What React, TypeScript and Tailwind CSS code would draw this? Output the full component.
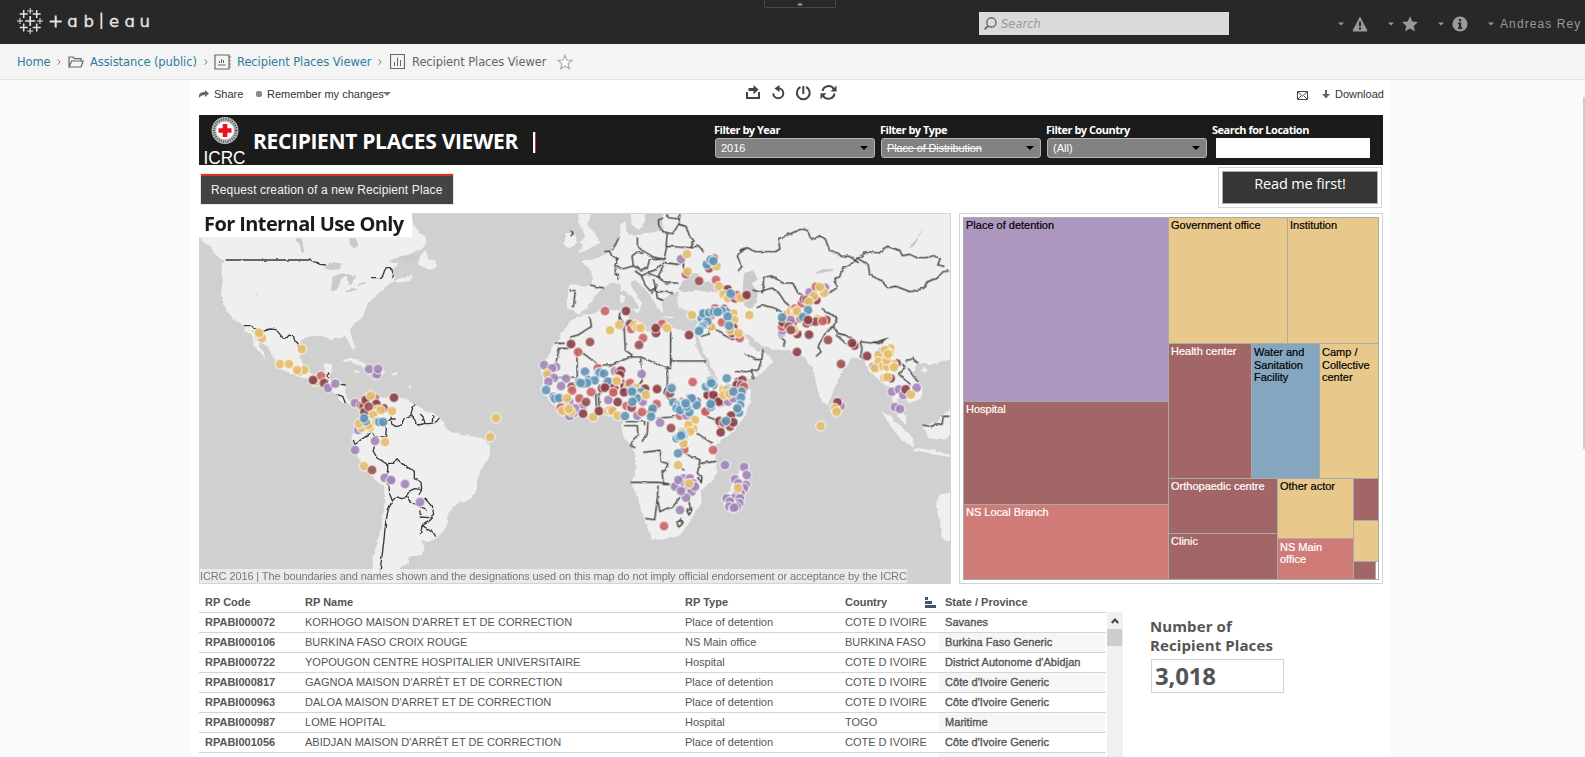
import React from "react";

const FILL: Record<string, string> = {
  y: "#e3bc6c",
  p: "#a184b6",
  b: "#98504f",
  d: "#883d42",
  r: "#c96462",
  u: "#6195b5",
};

/* Marker positions, drawn in order: colour key, x, y */
const AMERICAS =
  "y192,384 y201,399 y192,384 y320,432 y255,477 y282,477 y315,500 y327,495 y306,495 y362,530 r378,513 d354,525 d387,534 p399,549 p421,536 p540,508 p546,508 p522,492 p549,492 " +
  "p480,594 r498,602 r520,578 r540,580 b505,605 d512,585 y527,572 d597,578 d566,610 d544,597 d508,622 y546,615 y557,615 y591,618 b521,605 y535,630 p490,675 y512,665 y500,668 y525,668 y492,656 y520,660 y545,650 u553,651 u564,651 u512,648 u507,640 " +
  "p540,708 y570,711 p480,735 y507,783 b531,795 p569,819 p589,828 p588,825 p630,837 p675,891 y903,639 y885,696";
const OLD_WORLD =
  "p483,162 y501,147 b498,207 y503,199 b567,190 r582,160 y590,184 u560,178 u572,164 u580,168 b537,228 r588,225 y597,244 d623,253 y610,268 y624,280 b645,280 r650,270 d674,275 y662,279 u632,266 d680,270 y688,330 " +
  "r255,318 d318,318 y270,376 y297,360 d330,357 r334,372 y345,360 y352,368 y362,369 d408,384 r426,357 d407,369 y441,369 r369,399 b357,420 d507,390 r174,441 d153,417 b210,411 y516,330 " +
  "r585,310 d612,312 u553,327 p560,335 r574,330 u545,340 u550,325 u568,323 u582,320 y640,325 r606,352 y643,345 d640,368 y573,365 d636,384 y630,375 u618,320 u605,318 u593,321 u623,335 u627,362 r659,399 y656,384 u562,350 u550,361 u545,366 u540,373 u537,378 " +
  "p72,480 p108,486 p96,490 p84,513 y81,507 p102,519 p138,521 p123,543 p85,530 u78,555 b155,545 r156,557 p112,580 p100,575 y125,590 p148,590 p180,590 p190,600 p160,625 p148,633 p165,610 r122,608 r178,580 u105,581 u117,579 y141,579 y127,618 y153,620 y146,612 b198,591 d189,626 y219,636 d237,618 " +
  "u195,500 r233,490 u235,504 u240,503 u252,506 p285,498 d296,500 d303,497 d300,510 y292,525 d246,550 d258,540 d303,535 d309,547 b285,545 r276,530 u177,531 u190,537 u205,525 u224,526 u201,534 u182,534 u264,530 p365,507 " +
  "r213,561 d282,548 y325,545 r330,534 y347,548 d375,551 u336,555 u362,562 d411,552 b450,565 u455,549 r518,531 y291,525 d255,548 r279,563 d293,591 p265,585 r280,562 d312,562 y290,528 p368,590 r410,597 r320,603 b335,608 y350,575 y378,570 u350,580 u337,590 u336,560 y265,617 r275,615 y278,618 y293,632 u315,633 p352,632 r366,621 d395,620 u398,611 u393,635 p420,653 b453,669 " +
  "u468,598 r488,590 u460,592 u475,600 p520,605 d510,580 b530,590 u490,610 r480,632 p500,632 u470,610 u485,600 u495,593 u505,600 u518,588 u530,600 u508,622 u480,615 u500,605 u515,580 u497,595 " +
  "u566,548 u572,528 u580,540 y608,550 d565,567 r590,575 p600,595 d563,570 u558,545 u570,537 u574,534 u620,520 d655,530 d667,525 r660,545 y610,554 u623,550 u632,556 d575,590 b560,615 r556,620 d580,570 r605,590 d596,590 p625,590 p640,580 u573,605 u572,597 y620,555 y612,570 d650,540 d665,540 r672,545 u665,560 u663,578 u660,600 u652,615 u657,623 u652,610 y628,566 u640,560 " +
  "y525,645 y520,672 y505,660 p486,690 y492,710 r493,733 b605,660 b630,665 d633,632 d598,648 d612,652 d640,652 u618,648 d602,682 r579,735 y485,680 y510,680 y490,715 u470,700 u490,690 u478,695 u485,687 y474,780 u474,745 u483,692 " +
  "p470,838 p480,850 p490,820 p510,820 p520,835 p495,838 p465,845 p475,825 p505,850 p515,860 p525,845 p498,878 p483,858 y507,836 p480,915 r432,963 p615,780 p672,786 p680,810 p645,823 p660,840 p655,835 p678,840 p672,850 p662,865 p650,870 p640,880 p620,880 p630,890 p628,905 p660,880 p658,895 p640,910 p650,905 p642,908 y654,849 " +
  "p785,383 p787,376 r786,365 d788,352 r800,330 b818,355 y812,318 r826,310 y826,322 p812,345 r845,295 d852,283 p868,262 b860,285 r888,245 p915,248 d889,285 y882,273 y912,264 y900,246 y867,290 r842,340 y831,318 u786,337 b806,365 d832,387 y822,375 b813,375 d867,389 y870,345 b860,355 u864,315 d866,345 p900,350 r903,348 y892,342 b878,350 b887,350 d919,345 r908,348 u849,336 d864,345 b924,405 d831,441 b963,477 d1003,422 d996,414 d1041,453 " +
  "p1100,435 p1085,440 y1112,430 d1130,475 y1110,445 y1075,450 p1060,485 y1075,470 y1065,490 y1105,470 y1120,478 y1090,484 y1102,485 y1122,487 p1108,518 d1112,520 y1093,518 y1102,516 y1095,435 y1100,465 y1104,447 " +
  "p1116,560 p1137,553 p1150,570 p1190,548 d1157,553 y1173,569 p1125,606 p1140,612 p962,603 d952,592 y945,610 y950,620 y902,663 ";

const MAP_LINES_W =
  "M92,165H343 M343,160l8,10 12,2 12,6 18,2 M528,218h28q10,-6 12,-20l6,-10h12l4,14 6,14 M146,362l18,0 15,8 28,8 18,-6 18,2 12,14 10,12 10,-2 8,-8 12,6 6,14 8,10 4,10 M404,502l-8,10 2,14 M436,538l16,2 M425,568l18,6 8,20 " +
  "M475,705l5,14 14,-12 20,-14 14,-10 M530,683l10,12 32,0 2,-25 -6,-14 20,-14 14,0 M588,635l2,22 14,8 14,-4 10,-22 20,-8 4,-20 8,-12 M650,632l10,14 8,14 20,-4 14,0 20,-4 12,-14 M690,655l-6,-20 -8,-8 M712,650l2,-20 M540,723l-6,14 12,22 20,12 12,8 M578,775l18,0 10,-14 12,12 20,14 20,12 0,22 20,10 2,20 -8,18 M578,775l0,22 -6,20 10,26 2,24 8,20 M592,887l12,-12 16,6 14,-4 8,-18 16,-8 18,2 M634,877l14,14 28,14 20,8 M686,878l14,14 12,14 4,22 -12,10 -30,-2 M676,930l-2,-14 M716,935l-14,14 -20,12 -6,26 M682,961l20,14 16,12 4,8 M592,887l-12,26 -8,40 -6,60 -6,50 -8,60";

const MAP_LINES_E =
  "M440,24l6,14 30,4 M416,60l0,-16 14,-6 M416,60l12,20 30,6 18,-28 4,-34 M476,58l22,6 8,24 16,20 -10,20 -40,-2 -34,-2 4,-38 -18,-10 M512,128l24,-6 16,20 M352,95l0,30 20,14 30,18 30,6 8,-38 M252,140l16,-2 8,16 20,8 M296,100l-12,22 -8,14 M284,185l8,-28 M284,185l26,6 30,-8 -4,-30 14,-12 20,4 M340,183l22,12 20,-6 6,-24 50,-4 M286,190l0,18 8,-2 0,18 M345,198l20,14 20,-10 22,-8 24,-22 40,6 16,-4 8,30 M430,180l-16,36 -28,-10 M414,216l22,18 40,0 M365,214l10,26 16,18 20,-14 M400,222l8,30 -14,14 M410,260l22,0 28,4 M408,252l4,28 18,6 M210,240l42,10 M148,255l18,2 -6,50 M490,172l2,36 14,6 M152,75l8,10 -8,8 M654,198l12,-14 -14,-30 10,-20 14,-4 " +
  "M210,335l4,30 -14,8 -24,16 -26,8 M106,415h28 M106,480l12,-50h28 M170,430l2,86 -70,2 M170,430l66,50 40,0 56,-24 4,-6 -20,-14 -4,-80 -14,-20 M300,318l-4,34 M332,456l30,0 80,34 M362,460l4,30 0,40 -22,20 M442,490v48l-10,30 M452,370v120h-10 M452,468h106 M442,538l-10,24 14,20 20,30 M316,650h58v10 M312,662h40l2,30 -14,10 -8,20 14,6 M384,650l-2,32 -16,28 M370,742l50,-6 4,34 20,6 -8,20 -10,2 4,40h20 M332,832h80l34,4 M414,842l-2,40 -8,62 -28,-4 M414,890l6,30 20,-10 16,-2 30,-38 M505,880l8,40 -6,10 -6,-12 8,-6 M470,952l12,-8 6,12 -12,10z M410,640l46,-4 30,-16 M532,685l44,30 M542,775l46,-6 M520,755l20,10 -8,40 14,12 -2,14 -12,-14 M495,745l26,14 M485,790l8,6 M545,620l20,16 20,8 30,0 M226,555l4,60 M236,575l2,40 M242,560l-6,12 M555,440 " +
  "M540,395l28,-8 -2,-16 20,0 24,18 26,14 16,-2 M586,370l-22,-20 M645,500l30,0 40,-6 10,-30 4,-30 M694,498l8,24 M674,445l30,18 22,2 " +
  "M660,140l22,-12 24,12 60,0 14,-8 -6,-30 70,-30 20,4 6,22 18,4 10,-10 18,10 14,38 24,4 10,10 24,0 28,20 M1013,160l-28,24 -18,6 -8,26 -14,4 4,30 -22,14 -20,-8 M1013,160l28,-20 36,4 24,-20 38,12 8,16 22,-4 22,10 26,0 24,-6 20,8 -8,20 20,4 M1013,160l32,20 4,30 30,14 24,24 24,-4 44,16 40,-10 10,-20 30,-10 18,-20 18,-2 M730,264v-46l24,-6 34,22 30,0 16,30 14,6 M698,255l20,6 38,-12 20,14 20,30 20,16 M710,308l20,-8 40,12 16,10 M940,330l10,10 -8,22 -28,26 -20,36 10,16 -16,14 M780,395l16,14 -6,16 M905,310l24,16 22,14 -8,14 M940,365l14,20 24,6 30,20 M948,390l34,28 M1020,410l6,20 -4,24 8,12 M1022,410l30,4 20,-4 32,-10 M1060,410l16,6 24,-16 M1140,470l16,16 -20,20 20,20 16,12 M1155,470l22,-10 18,14 M1165,490l12,20 18,22 M1210,660l24,6 14,-10 18,2 4,-24 18,0";

function dots(src: string) {
  return src
    .trim()
    .split(/\s+/)
    .map((s, i) => {
      const [x, y] = s.slice(1).split(",");
      return (
        <circle key={i} cx={x} cy={y} r="14.800" fill={FILL[s[0]]} fillOpacity="0.9" stroke="#fff" strokeWidth="3" />
      );
    });
}

function WorldMap() {
  return (
    <svg viewBox="200 214 750 369" className="block h-[369px] w-[750px] bg-[#d1d1d1]">
      <defs>
        <filter id="coast" x="-5%" y="-5%" width="110%" height="110%">
          <feTurbulence type="fractalNoise" baseFrequency="0.16" numOctaves="2" seed="4" />
          <feDisplacementMap in="SourceGraphic" scale="4" xChannelSelector="R" yChannelSelector="G" result="d" />
          <feGaussianBlur in="d" stdDeviation="5" result="b" />
          <feColorMatrix in="b" type="matrix" values="0 0 0 0 .6 0 0 0 0 .6 0 0 0 0 .6 0 0 0 .5 0" result="s" />
          <feMerge>
            <feMergeNode in="s" />
            <feMergeNode in="d" />
          </feMerge>
        </filter>
        <filter id="rough" x="-5%" y="-5%" width="110%" height="110%">
          <feTurbulence type="fractalNoise" baseFrequency="0.2" numOctaves="1" seed="9" />
          <feDisplacementMap in="SourceGraphic" scale="3" xChannelSelector="R" yChannelSelector="G" />
        </filter>
      </defs>
      <g filter="url(#coast)" fill="#efefef">
        <g transform="translate(195 205) scale(.33333)">
          <path d="M0,80 30,115 45,125 62,148 90,172 80,178 80,215 82,235 78,270 88,305 110,338 145,360 152,378 165,390 178,412 180,425 195,440 212,462 205,440 190,418 178,395 170,372 185,385 200,405 215,425 238,455 248,482 270,497 300,510 340,525 365,525 395,545 410,558 430,572 440,592 460,598 480,606 492,600 510,577 540,570 560,576 600,573 640,585 665,600 690,618 715,625 740,645 755,675 800,688 860,700 885,722 885,750 865,785 850,810 845,855 830,880 790,893 760,925 755,965 725,1000 700,1010 678,1004 690,1030 680,1050 640,1055 640,1075 615,1090 620,1140 530,1140 535,1050 545,1020 560,960 568,900 568,845 540,825 500,775 480,735 466,705 480,680 495,650 498,615 470,598 456,580 448,555 450,540 430,530 402,526 405,510 415,478 392,474 385,500 360,510 335,500 320,470 312,445 312,418 325,400 350,393 380,393 412,405 432,397 455,395 465,420 475,437 480,425 470,395 465,378 480,355 510,330 515,300 545,270 560,255 585,235 600,228 600,212 590,195 612,178 580,170 600,158 650,148 680,132 695,118 690,90 660,70 640,0 0,0z" />
          <path d="M668,178 680,150 695,132 698,160 722,168 722,190 705,194 690,186z M600,230 615,218 650,210 652,222 625,235z M440,467 465,458 500,470 530,484 515,492 470,470z M530,496 548,488 575,500 560,512 530,508z M590,505h15v6h-15z M480,495l14,4 -2,6 -14,-4z M635,510l4,6 M640,540l8,4 -4,8z" />
        </g>
        <g transform="translate(520 205) scale(.33333)">
          <path d="M440,0 425,45 432,75 410,80 390,85 355,90 322,88 314,48 300,60 302,95 290,115 265,140 235,160 205,163 183,172 214,195 216,236 195,242 147,237 140,305 178,326 205,305 228,268 252,248 280,232 300,240 335,280 355,300 352,318 370,296 345,262 332,235 345,225 385,262 412,310 430,325 425,290 450,268 478,262 470,285 478,310 520,322 537,335 527,372 535,395 550,440 580,500 600,545 625,550 680,522 725,505 760,468 740,445 728,432 715,442 690,420 670,388 690,390 720,420 760,434 800,436 850,450 865,475 880,490 890,545 905,590 925,598 940,560 965,500 1000,455 1030,465 1050,500 1078,525 1110,550 1120,600 1135,635 1160,660 1158,635 1140,610 1130,585 1145,570 1170,598 1203,580 1208,548 1180,505 1190,475 1235,478 1300,460 1300,0z" />
          <path d="M178,332 205,330 240,318 300,315 328,322 325,345 345,362 370,370 405,388 425,365 450,365 490,378 520,380 528,400 525,420 545,455 560,485 570,510 590,545 612,570 650,562 694,556 690,590 670,640 640,680 610,700 588,722 590,805 575,830 545,855 545,895 520,930 500,970 470,995 430,1003 400,1005 388,985 365,920 355,880 335,830 350,790 345,740 310,695 303,660 312,640 280,632 250,620 190,632 150,640 110,610 75,570 63,550 70,520 65,490 85,450 105,415 130,380 150,350z" />
          <path d="M180,0 210,24 200,60 228,88 242,112 215,130 175,145 190,122 178,108 196,92 178,55 172,24z M140,85 165,82 172,112 150,130 130,118z M330,0 335,60 355,72 375,50 380,0z M640,830 670,790 688,785 680,830 660,890 640,920 615,905 620,870z M302,240h10v22h-10z M300,270h14v24h-14z M335,312h25l-8,14z M430,335h30v5h-30z M500,330h20v8h-20z M955,580 968,590 970,612 955,618z M1085,622 1110,632 1150,672 1180,700 1180,726 1145,706 1115,668z M1180,728 1240,735 1295,750 1295,757 1230,747 1182,738z M1210,665 1250,648 1275,622 1300,610 1300,680 1270,706 1225,700z M1255,870 1300,860 1300,1012 1268,1005 1260,960 1248,905z M1208,485l14,4 -6,14 -14,-6z" />
        </g>
      </g>
      <g fill="#cbcbcb" filter="url(#rough)">
        <g transform="translate(195 205) scale(.33333)">
          <path d="M388,190 405,172 440,175 435,192 410,196z M412,215 440,205 480,212 478,225 452,215 440,222 425,255 410,258z M455,212 480,212 470,240 460,238z M450,258 485,248 484,256 455,262z M484,238 510,230 512,236 490,242z M462,95 482,100 490,120 478,132 464,118z M300,100l20,0 8,40 -8,8 -6,-30z M180,262l8,6 -2,4z M612,160 640,150 660,140 664,165 640,180z" />
        </g>
        <g transform="translate(520 205) scale(.33333)">
          <path d="M488,232 505,205 535,205 545,225 580,238 604,262 570,262 525,255 490,262 475,252z M672,205 700,195 715,225 695,235 712,262 712,290 690,312 672,300 668,255z M560,205l14,-8 -4,-20 -16,14z M380,60 415,50 420,20 440,0 385,0 378,40z M1213,65l-10,20 -20,38 -18,8 24,-30z M890,200l20,-8 30,0 -2,6 -48,8z" />
        </g>
      </g>
      <g fill="none" stroke="#383838" strokeWidth="4" strokeLinejoin="round" filter="url(#rough)">
        <g transform="translate(195 205) scale(.33333)">
          <path d={MAP_LINES_W} />
        </g>
        <g transform="translate(520 205) scale(.33333)">
          <path d={MAP_LINES_E} />
        </g>
      </g>
      <g transform="translate(195 205) scale(.33333)">{dots(AMERICAS)}</g>
      <g transform="translate(520 205) scale(.33333)">{dots(OLD_WORLD)}</g>
    </svg>
  );
}

const ROWS: [string, string, string, string, string][] = [
  ["RPABI000072", "KORHOGO MAISON D'ARRET ET DE CORRECTION", "Place of detention", "COTE D IVOIRE", "Savanes"],
  ["RPABI000106", "BURKINA FASO CROIX ROUGE", "NS Main office", "BURKINA FASO", "Burkina Faso Generic"],
  ["RPABI000722", "YOPOUGON CENTRE HOSPITALIER UNIVERSITAIRE", "Hospital", "COTE D IVOIRE", "District Autonome d'Abidjan"],
  ["RPABI000817", "GAGNOA MAISON D'ARRÊT ET DE CORRECTION", "Place of detention", "COTE D IVOIRE", "Côte d'Ivoire Generic"],
  ["RPABI000963", "DALOA MAISON D'ARRET ET DE CORRECTION", "Place of detention", "COTE D IVOIRE", "Côte d'Ivoire Generic"],
  ["RPABI000987", "LOME HOPITAL", "Hospital", "TOGO", "Maritime"],
  ["RPABI001056", "ABIDJAN MAISON D'ARRÊT ET DE CORRECTION", "Place of detention", "COTE D IVOIRE", "Côte d'Ivoire Generic"],
  ["", "", "", "", ""],
];

function Cell({ className, children }: { className: string; children?: React.ReactNode }) {
  return <div className={"overflow-hidden pl-[2px] pt-px text-[11px] leading-[12px] [-webkit-text-stroke:0.2px] " + className}>{children}</div>;
}

function Treemap() {
  const brown = "bg-[#a36666] text-white";
  const yellow = "bg-[#e8c98b] text-black";
  const rose = "bg-[#cf7c78] text-white";
  return (
    <div className="ml-[8px] h-[371px] w-[424px] border border-[#d4d4d4] bg-white p-[3px]">
      <div className="flex h-[363px] w-[416px] gap-px border border-[#aaa] bg-[#aaa]">
        <div className="flex w-[204px] flex-col gap-px">
          <Cell className="h-[183px] bg-[#ad97be] text-black">Place of detention</Cell>
          <Cell className={"h-[102px] " + brown}>Hospital</Cell>
          <Cell className={"flex-1 " + rose}>NS Local Branch</Cell>
        </div>
        <div className="flex flex-1 flex-col gap-px">
          <div className="flex h-[125px] gap-px">
            <Cell className={"w-[118px] " + yellow}>Government office</Cell>
            <Cell className={"flex-1 " + yellow}>Institution</Cell>
          </div>
          <div className="flex h-[134px] gap-px">
            <Cell className={"w-[82px] " + brown}>Health center</Cell>
            <Cell className="w-[67px] bg-[#84a6be] text-black"><div className="pt-px leading-[12.5px]">Water and Sanitation Facility</div></Cell>
            <Cell className={"flex-1 " + yellow}><div className="pt-px leading-[12.5px]">Camp / Collective center</div></Cell>
          </div>
          <div className="flex flex-1 gap-px">
            <div className="flex w-[108px] flex-col gap-px">
              <Cell className={"h-[54px] whitespace-nowrap " + brown}>Orthopaedic centre</Cell>
              <Cell className={"flex-1 " + brown}>Clinic</Cell>
            </div>
            <div className="flex w-[75px] flex-col gap-px">
              <Cell className={"h-[59px] " + yellow}>Other actor</Cell>
              <Cell className={"flex-1 " + rose}><div className="w-[50px] pt-px">NS Main office</div></Cell>
            </div>
            <div className="flex flex-1 flex-col gap-px">
              <Cell className={"h-[41px] " + brown} />
              <Cell className={"h-[40px] " + yellow} />
              <div className="flex flex-1 gap-px">
                <Cell className={"w-[21px] " + brown} />
                <div className="flex-1 bg-white" />
              </div>
            </div>
          </div>
        </div>
      </div>
    </div>
  );
}

function Caret({ className }: { className: string }) {
  return (
    <svg viewBox="0 0 8 4" className={className}>
      <path d="M0 0h8L4 4z" fill="currentColor" />
    </svg>
  );
}

const FILTER_LABEL =
  "-ml-px h-[15px] whitespace-nowrap font-['Open_Sans','Noto_Sans',sans-serif] text-[11px] font-bold leading-[13px] tracking-[-0.5px] text-white";

function Filter({ label, value, strike }: { label: string; value: string; strike?: boolean }) {
  return (
    <div className="mr-[6px] w-[160px]">
      <div className={FILTER_LABEL}>{label}</div>
      <div className="flex h-[20px] items-center justify-between rounded-[3px] border border-[#b4b4b4] bg-[#828282] pl-[5px] pr-[6px] text-[11px] text-white">
        <span className={strike ? "tracking-[-0.15px] line-through" : ""}>{value}</span>
        <Caret className="h-[4px] w-[8px] text-black" />
      </div>
    </div>
  );
}

function Plus({ x, y, s, w }: { x: number; y: number; s: number; w: number }) {
  return <path d={`M${x - s} ${y}h${2 * s}M${x} ${y - s}v${2 * s}`} stroke="#e4e4e4" strokeWidth={w} />;
}

function Logo() {
  return (
    <svg viewBox="0 0 160 44" className="h-[44px] w-[160px]">
      <Plus x={30.2} y={21} s={5} w={1.7} />
      <Plus x={23.7} y={14} s={4} w={1.5} />
      <Plus x={36.7} y={14} s={4} w={1.5} />
      <Plus x={23.7} y={27.5} s={4} w={1.5} />
      <Plus x={36.7} y={27.5} s={4} w={1.5} />
      <Plus x={30.2} y={11} s={3} w={1} />
      <Plus x={30.2} y={31} s={3} w={1} />
      <Plus x={20} y={21} s={3} w={1} />
      <Plus x={40} y={21} s={3} w={1} />
      <Plus x={55.7} y={21.5} s={6} w={2} />
      <path d="M101.400 12.500v16.500" stroke="#e4e4e4" strokeWidth="1.800" />
      <g fill="#e4e4e4" stroke="#e4e4e4" strokeWidth=".3" className="font-['DejaVu_Sans',sans-serif] text-[16.5px]">
        <text x="67.300" y="27.300">ɑ</text>
        <text x="83.500" y="27.300">b</text>
        <text x="109" y="27.300">e</text>
        <text x="124.500" y="27.300">ɑ</text>
        <text x="139.500" y="27.300">u</text>
      </g>
    </svg>
  );
}

function Sep() {
  return (
    <svg viewBox="0 0 4 6" className="h-[6px] w-[4px]">
      <path d="M.5 .3 3.2 3 .5 5.7" fill="none" stroke="#777" />
    </svg>
  );
}

export default function App() {
  return (
    <div className="relative h-[757px] w-[1585px] overflow-hidden bg-[#fafafa] font-['Liberation_Sans',Arial,sans-serif]">
      <header className="flex h-[44px] items-center bg-[#282828] text-[#999]">
        <Logo />
        <div className="ml-[604px] flex h-[8px] w-[72px] items-center justify-center self-start rounded-b-[2px] border border-t-0 border-[#484848]">
          <Caret className="h-[4px] w-[6px] rotate-180 text-[#999]" />
        </div>
        <div className="ml-[143px] mt-[12px] flex h-[23px] w-[250px] items-center self-start bg-[#dadada] pl-[5px]">
          <svg viewBox="0 0 13 13" className="h-[13px] w-[13px]" fill="none" stroke="#666">
            <circle cx="7.4" cy="5.4" r="4.6" strokeWidth="1.4" />
            <path d="M4.2 8.6.6 12.4" strokeWidth="1.8" />
          </svg>
          <span className="ml-[4px] mt-[2px] font-['DejaVu_Sans',sans-serif] text-[11.5px] italic leading-none text-[#999]">Search</span>
        </div>
        <div className="ml-[109px] mt-[3px] flex items-center">
          <Caret className="h-[4px] w-[6px]" />
          <svg viewBox="0 0 16 16" className="ml-[8px] h-[16px] w-[16px]">
            <path d="M8 .5 15.4 14.4a.8.8 0 0 1-.7 1H1.3a.8.8 0 0 1-.7-1z" fill="#999" />
            <path d="M7 5.5h2v4.8H7zM7 11.5h2v2H7z" fill="#282828" />
          </svg>
          <Caret className="ml-[20px] h-[4px] w-[6px]" />
          <svg viewBox="0 0 16 16" className="ml-[8px] h-[16px] w-[16px]">
            <path d="M8 .2 10.3 5.6 16 6.1 11.7 9.9 13 15.6 8 12.6 3 15.6 4.3 9.9 0 6.1 5.7 5.6z" fill="#999" />
          </svg>
          <Caret className="ml-[20px] h-[4px] w-[6px]" />
          <svg viewBox="0 0 16 16" className="ml-[8px] h-[16px] w-[16px]">
            <circle cx="8" cy="8" r="7.6" fill="#999" />
            <path d="M7 3h2.2v2.2H7zM6 6.6h3.2v4.6h1V13H6v-1.8h1V8.2H6z" fill="#282828" />
          </svg>
          <Caret className="ml-[20px] h-[4px] w-[6px]" />
          <span className="ml-[6px] whitespace-nowrap text-[12px] leading-[14px] tracking-[1.1px] text-[#999]">Andreas Rey</span>
        </div>
      </header>

      <nav className="flex h-[36px] items-center border-b border-[#e2e2e2] bg-[#f4f4f4] pl-[17px] font-['DejaVu_Sans',sans-serif] text-[11.5px] leading-none tracking-[-0.09px] text-[#2f7e9e]">
        <span className="mt-[2px] w-[40px]">Home</span>
        <Sep />
        <svg viewBox="0 0 16 12" className="ml-[7px] h-[12px] w-[16px]" fill="none" stroke="#666" strokeWidth="1.2">
          <path d="M1 11V1h4l1.5 1.6H13V5M1 11 3.6 5h11.6L13 11z" />
        </svg>
        <span className="ml-[6px] mt-[2px] w-[114px] whitespace-nowrap">Assistance (public)</span>
        <Sep />
        <svg viewBox="0 0 17 16" className="ml-[6px] h-[16px] w-[17px]" fill="none" stroke="#666">
          <path d="M1 1h14v14H1z" strokeWidth="1.2" />
          <path d="M5.5 9V7M7.5 9V5M9.5 9V6M4 11h7.5" />
          <path d="M16 2v12" strokeDasharray="2 1.5" />
        </svg>
        <span className="ml-[6px] mt-[2px] w-[141px] whitespace-nowrap">Recipient Places Viewer</span>
        <Sep />
        <svg viewBox="0 0 15 15" className="ml-[8px] h-[15px] w-[15px]" fill="none" stroke="#666">
          <path d="M.5.5h14v14H.5z" strokeWidth="1.2" />
          <path d="M4.5 12V8M7.5 12V3.5M10.5 12V6" />
        </svg>
        <span className="ml-[7px] mt-[2px] w-[137px] whitespace-nowrap text-[#666]">Recipient Places Viewer</span>
        <svg viewBox="0 0 16 16" className="ml-[8px] h-[16px] w-[16px]">
          <path d="M8 1.2 9.9 6 15 6.3 11.1 9.6 12.4 14.7 8 11.9 3.6 14.7 4.9 9.6 1 6.3 6.1 6z" fill="#fff" stroke="#aaa" strokeWidth="1.2" />
        </svg>
      </nav>

      <main className="ml-[191px] h-[677px] w-[1200px] bg-white pl-[8px]">
        <div className="flex h-[35px] items-start pt-[5px] text-[#444]">
          <div className="flex h-[18px] w-[547px] items-center text-[12px] leading-none text-[#333]">
            <svg viewBox="0 0 10 8" className="h-[8px] w-[10px]">
              <path d="M0 8V5.5Q0 2 6 2V0l4 3.5L6 7V5Q2 5 0 8z" fill="#666" />
            </svg>
            <span className="ml-[5px] w-[42px] text-[11px]">Share</span>
            <span className="h-[6px] w-[6px] rounded-[2px] bg-[#888]" />
            <span className="ml-[5px] text-[11px]">Remember my changes</span>
            <Caret className="-ml-px h-[4px] w-[8px] text-[#777]" />
          </div>
          <svg viewBox="0 0 92 16" className="h-[16px] w-[92px]" fill="none" stroke="#444" strokeWidth="2">
            <path d="M1 7v6h12V7" />
            <path d="M2.500 4.500H9" strokeWidth="3" />
            <path d="M7.500 0V9.500L12.500 4.500z" fill="#444" stroke="none" />
            <path d="M27.300 8.300a5 5 0 1 0 5-5" />
            <path d="M33.500 0v7l-5-3.500z" fill="#444" stroke="none" />
            <path d="M54.500 2a6.400 6.400 0 1 0 5.600 0" />
            <path d="M57.300 1v8" />
            <path d="M76.500 6a6.200 6.200 0 0 1 11.300-2M88.500 8.500a6.200 6.200 0 0 1-11.300 2.500" />
            <path d="M90.500 .5v6h-6zM74.500 14.300v-6h6z" fill="#444" stroke="none" />
          </svg>
          <div className="ml-[459px] flex h-[18px] items-center">
            <svg viewBox="0 0 11 9" className="mt-[2px] h-[9px] w-[11px]" fill="none" stroke="#444">
              <path d="M.5.500h10v8H.5zM1 1l4.500 4L10 1M1 8l3-3M10 8 7 5" />
            </svg>
            <svg viewBox="0 0 8 9" className="ml-[14px] h-[9px] w-[8px]">
              <path d="M3 0h2v4h3L4 8.500 0 4h3z" fill="#666" />
            </svg>
            <span className="ml-[5px] text-[11px] leading-none text-[#333]">Download</span>
          </div>
        </div>

        <div className="flex h-[50px] w-[1184px] bg-[#1b1b1b]">
          <svg viewBox="0 0 50 50" className="h-[50px] w-[50px] overflow-visible">
            <circle cx="26" cy="15.500" r="11.500" fill="#fff" />
            <circle cx="26" cy="15.500" r="11.200" fill="none" stroke="#bbb" strokeWidth="4.600" />
            <circle cx="26" cy="15.500" r="11.200" fill="none" stroke="#555" strokeWidth="2.600" strokeDasharray="1 1.300" />
            <path d="M26 9v13M19.500 15.500h13" stroke="#e8121d" strokeWidth="4.600" />
            <text x="4.500" y="48.700" fill="#fff" textLength="42" lengthAdjust="spacingAndGlyphs" className="font-['Liberation_Sans',Arial,sans-serif] text-[18px] leading-none">ICRC</text>
          </svg>
          <h1 className="ml-[4px] mt-[12px] w-[462px] whitespace-nowrap font-['Open_Sans','Noto_Sans',sans-serif] text-[21px] font-bold leading-[28px] tracking-[-0.33px] text-white">
            RECIPIENT PLACES VIEWER<span className="ml-[15px] inline-block h-[21px] w-[3px] border-r border-[#b33] bg-white align-[-4px]" />
          </h1>
          <div className="flex pt-[8px]">
            <Filter label="Filter by Year" value="2016" />
            <Filter label="Filter by Type" value="Place of Distribution" strike />
            <Filter label="Filter by Country" value="(All)" />
            <div>
              <div className={FILTER_LABEL}>Search for Location</div>
              <div className="ml-[3px] h-[20px] w-[154px] bg-white" />
            </div>
          </div>
        </div>

        <div className="flex h-[48px] w-[1184px] justify-between">
          <div className="ml-px mt-[8px] h-[32px] w-[254px] border border-[#e6e6e6] bg-[#444]">
            <div className="flex h-full items-center border-t-2 border-[#d9302a] pl-[10px] text-[12px] leading-none tracking-[0.13px] text-[#f2f2f2]">Request creation of a new Recipient Place</div>
          </div>
          <div className="mr-px mt-[2px] h-[41px] w-[164px] border border-[#d4d4d4] p-[3px]">
            <div className="h-[33px] border border-[#aaa] bg-[#363636] text-center font-['Open_Sans','Noto_Sans',sans-serif] text-[14.5px] leading-[24px] tracking-[-0.15px] text-white">Read me first!</div>
          </div>
        </div>

        <div className="flex">
          <div className="relative h-[371px] w-[752px] border border-[#d4d4d4]">
            <WorldMap />
            <div className="absolute -left-px -top-px h-[24px] w-[213px] whitespace-nowrap bg-white pl-[5px] font-['Open_Sans','Noto_Sans',sans-serif] text-[20px] font-bold leading-[21px] tracking-[-0.6px] text-[#1b1b1b]">For Internal Use Only</div>
            <div className="absolute bottom-0 left-0 h-[14px] w-[707px] whitespace-nowrap bg-[#f0f0f0]/80 text-[11px] leading-[14px] tracking-[-0.11px] text-[#777]">ICRC 2016 | The boundaries and names shown and the designations used on this map do not imply official endorsement or acceptance by the ICRC</div>
          </div>
          <Treemap />
        </div>

        <div className="flex text-[11px] leading-none text-[#555]">
          <div className="w-[907px]">
            <div className="flex h-[29px] items-center border-b border-[#d4d4d4] pl-[6px] pt-[8px] font-bold">
              <span className="w-[100px]">RP Code</span>
              <span className="w-[380px]">RP Name</span>
              <span className="w-[160px]">RP Type</span>
              <span className="w-[80px]">Country</span>
              <svg viewBox="0 0 11 11" className="h-[11px] w-[20px]" preserveAspectRatio="xMinYMin" fill="#44546a">
                <path d="M0 0h3v3H0zM0 4h7v3H0zM0 8h11v3H0z" />
              </svg>
              <span>State / Province</span>
            </div>
            {ROWS.map((r, i) => (
              <div key={i} className="flex h-[20px] items-center border-b border-[#d4d4d4]">
                <span className="w-[106px] pl-[6px] font-bold">{r[0]}</span>
                <span className="w-[380px] tracking-[0.02px]">{r[1]}</span>
                <span className="w-[160px]">{r[2]}</span>
                <span className="w-[94px]">{r[3]}</span>
                <span className={"flex h-full w-[166px] items-center pl-[6px] tracking-[0.05px] [-webkit-text-stroke:0.35px_#555] " + (i % 2 ? "bg-[#f6f6f6]" : "")}>{r[4]}</span>
              </div>
            ))}
          </div>
          <div className="ml-px mt-[28px] h-[150px] w-[16px] bg-[#f0f0f0]">
            <div className="flex h-[17px] items-center justify-center">
              <svg viewBox="0 0 8 6" className="h-[6px] w-[8px]">
                <path d="M.8 5 4 1.500 7.200 5" fill="none" stroke="#444" strokeWidth="2" />
              </svg>
            </div>
            <div className="h-[17px] w-[15px] bg-[#cdcdcd]" />
          </div>
          <div className="ml-[28px] mt-[33px]">
            <div className="-ml-px whitespace-nowrap font-['Open_Sans','Noto_Sans',sans-serif] text-[15px] font-bold leading-[19px] tracking-[0.1px] text-[#555]">Number of<br />Recipient Places</div>
            <div className="mt-[4px] h-[34px] w-[133px] border border-[#d4d4d4] pl-[3px] font-['Open_Sans','Noto_Sans',sans-serif] text-[24px] font-bold leading-[31px] tracking-[-0.2px] text-[#555]">3,018</div>
          </div>
        </div>
      </main>
      <div className="absolute right-0 top-[97px] h-[352px] w-[2px] bg-[#ccc]" />
    </div>
  );
}
